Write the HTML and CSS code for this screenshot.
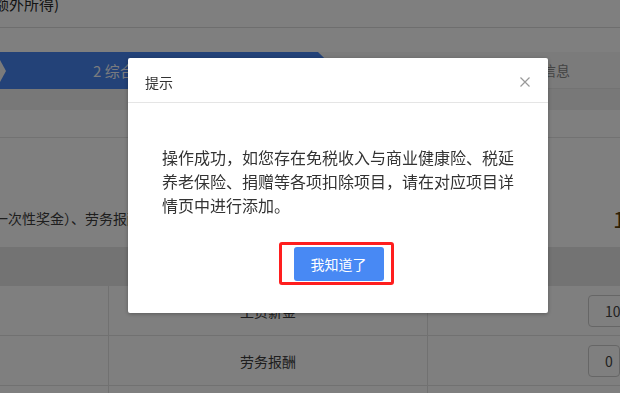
FILE: index.html
```html
<!DOCTYPE html>
<html lang="zh-CN">
<head>
    <meta charset="UTF-8" />
    <meta name="viewport" content="width=device-width, initial-scale=1.0"/>
    <title>综合所得申报</title>
    <link rel="stylesheet" href="styles.css">
</head>
<body>

    <div class="page">
        <div class="page-title"><span>额外所得)</span></div>
        <div class="page-gap"></div>

        <div class="steps">
            <div class="step step-current">
                <i class="step-prev-tip"></i>
                <span>2 综合所得收入信息</span>
            </div>
            <div class="step step-next">
                <span>3 其他扣除信息</span>
            </div>
        </div>
        <div class="sub-band"></div>
        <div class="section-head"></div>

        <div class="summary">
            <div class="summary-text">一次性奖金）、劳务报酬、稿酬、特许权使用费</div>
            <div class="summary-amount">100000.00</div>
        </div>

        <div class="income-table">
            <div class="table-head"></div>
            <div class="table-row">
                <div class="cell cell-side"></div>
                <div class="cell cell-name">工资薪金</div>
                <div class="cell cell-value"><span class="value-box">100000.00</span></div>
            </div>
            <div class="table-row">
                <div class="cell cell-side"></div>
                <div class="cell cell-name">劳务报酬</div>
                <div class="cell cell-value"><span class="value-box">0</span></div>
            </div>
            <div class="table-row">
                <div class="cell cell-side"></div>
                <div class="cell cell-name">稿酬</div>
                <div class="cell cell-value"><span class="value-box">0</span></div>
            </div>
        </div>
    </div>

    <!-- 弹窗遮罩 -->
    <div class="mask"></div>

    <div class="dialog">
        <div class="dialog-header">
            <span class="dialog-title">提示</span>
            <svg class="dialog-close" width="10" height="10" viewBox="0 0 10 10">
                <path d="M0.5 0.5 L9.5 9.5 M9.5 0.5 L0.5 9.5" stroke="#999" stroke-width="1.2" fill="none"/>
            </svg>
        </div>
        <div class="dialog-body">
            <p class="dialog-msg">操作成功，如您存在免税收入与商业健康险、税延养老保险、捐赠等各项扣除项目，请在对应项目详情页中进行添加。</p>
            <div class="dialog-footer">
                <span class="btn-wrap">
                    <button class="btn-primary">我知道了</button>
                    <i class="mark-box"></i>
                </span>
            </div>
        </div>
    </div>

</body>
</html>
```

FILE: styles.css
```css
        body {
            margin: 0;
            height: 100vh;
            overflow: hidden;
            background: #fff;
            font-family: "Noto Sans CJK SC", "Noto Sans", sans-serif;
            color: #333;
        }

        .page {
            width: 100%;
        }

        .page-title {
            height: 27px;
            border-bottom: 1px solid #ddd;
            font-size: 15px;
        }

        .page-title span {
            display: block;
            line-height: 8px;
            text-indent: -6px;
            color: #2a2a2a;
            white-space: nowrap;
        }

        .page-gap {
            height: 24px;
        }

        /* 步骤条 */
        .steps {
            display: flex;
            height: 37px;
            background: #f6f6f6;
            font-size: 15px;
            line-height: 37px;
        }

        .step {
            position: relative;
            white-space: nowrap;
        }

        .step-current {
            flex: 0 0 337px;
            padding-left: 93px;
            box-sizing: border-box;
            background: #4684f0;
            color: rgba(255, 255, 255, 0.95);
            clip-path: polygon(0 0, 318px 0, 337px 50%, 318px 100%, 0 100%);
        }

        .step-prev-tip {
            position: absolute;
            left: 0;
            top: 8px;
            width: 6px;
            height: 22px;
            background: #f6f6f6;
            clip-path: polygon(0 0, 100% 50%, 0 100%);
        }

        .step-next {
            flex: 1;
            text-align: right;
            padding-right: 50px;
            color: #888;
            font-size: 14px;
            border-bottom: 1px solid #e6e6e6;
        }

        .sub-band {
            height: 21px;
            background: #f0f0f0;
        }

        .section-head {
            height: 27px;
            border-bottom: 1px solid #e4e4e4;
        }

        .summary {
            display: flex;
            align-items: center;
            height: 109px;
            padding-top: 50px;
            box-sizing: border-box;
            white-space: nowrap;
        }

        .summary-text {
            flex: 0 0 613px;
            overflow: hidden;
            font-size: 14px;
            text-indent: -6px;
            color: #3c3c3c;
        }

        .summary-amount {
            font-size: 22px;
            color: #5e420f;
        }

        /* 收入表格 */
        .table-head {
            height: 39px;
            background: #e6e6e6;
        }

        .table-row {
            display: flex;
            height: 49px;
            border-bottom: 1px solid #e2e2e2;
        }

        .cell {
            display: flex;
            align-items: center;
        }

        .cell-side {
            flex: 0 0 108px;
            border-right: 1px solid #e2e2e2;
        }

        .cell-name {
            flex: 0 0 318px;
            justify-content: center;
            border-right: 1px solid #e2e2e2;
            font-size: 14px;
            color: #3c3c3c;
        }

        .cell-value {
            flex: 1;
            padding-left: 160px;
            overflow: hidden;
        }

        .value-box {
            display: block;
            height: 30px;
            line-height: 30px;
            padding-left: 16px;
            width: 120px;
            border: 1px solid #ccc;
            border-radius: 4px;
            font-size: 14px;
            color: #444;
            white-space: nowrap;
        }

        /* 遮罩与弹窗 */
        .mask {
            position: fixed;
            inset: 0;
            background: rgba(0, 0, 0, 0.5);
        }

        .dialog {
            position: fixed;
            left: 128px;
            top: 58px;
            width: 420px;
            background: #fff;
            border-radius: 2px;
            box-shadow: 0 1px 4px rgba(0, 0, 0, 0.3);
        }

        .dialog-header {
            display: flex;
            justify-content: space-between;
            align-items: center;
            height: 45px;
            padding: 3px 18px 0 17px;
            box-sizing: border-box;
            border-bottom: 1px solid #e5e5e5;
        }

        .dialog-title {
            font-size: 14px;
            line-height: 20px;
            color: #333;
        }

        .dialog-body {
            padding: 42px 34px 32px;
        }

        .dialog-msg {
            margin: 0;
            font-size: 16px;
            line-height: 24px;
            color: #333;
        }

        .dialog-footer {
            display: flex;
            justify-content: center;
            margin-top: 30px;
        }

        .btn-wrap {
            position: relative;
            display: block;
            margin-left: 1px;
        }

        .btn-primary {
            display: block;
            width: 90px;
            height: 34px;
            border: 0;
            border-radius: 3px;
            background: #4889f4;
            color: #fff;
            font-family: inherit;
            font-size: 14px;
        }

        /* 红框标注 */
        .mark-box {
            position: absolute;
            left: -15px;
            right: -10px;
            top: -5px;
            bottom: -4px;
            border: 3px solid #ff1e1e;
            border-radius: 3px;
        }
```
